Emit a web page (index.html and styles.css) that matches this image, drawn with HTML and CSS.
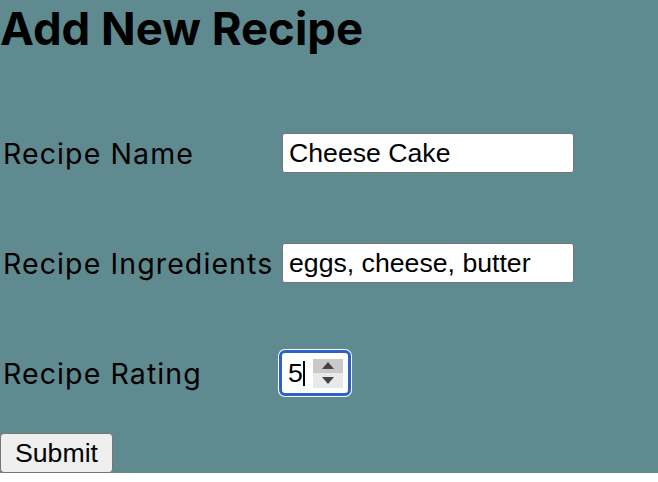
FILE: index.html
```html
<!DOCTYPE html>
<html lang="en">
  <head>
    <title>Add New Recipe</title>
    <link rel="stylesheet" href="styles.css">
  </head>
  <body>
    <div class="page">
      <h1 class="title">Add New Recipe</h1>
      <form class="recipe-form">
        <div class="field">
          <label for="name">Recipe Name</label>
          <input id="name" class="text-input" type="text" value="Cheese Cake">
        </div>
        <div class="field">
          <label for="ingredients">Recipe Ingredients</label>
          <input id="ingredients" class="text-input" type="text" value="eggs, cheese, butter">
        </div>
        <div class="field">
          <label for="rating">Recipe Rating</label>
          <div class="number-box">
            <input id="rating" class="number-input" type="text" value="5">
            <span class="caret"></span>
            <span class="spinner">
              <span class="spin spin-up">
                <svg width="12" height="7" viewBox="0 0 12 7"><path d="M0 7 L6 0 L12 7 Z" fill="#444"/></svg>
              </span>
              <span class="spin spin-down">
                <svg width="12" height="7" viewBox="0 0 12 7"><path d="M0 0 L12 0 L6 7 Z" fill="#444"/></svg>
              </span>
            </span>
          </div>
        </div>
        <button class="submit" type="submit">Submit</button>
      </form>
    </div>
  </body>
</html>
```

FILE: styles.css
```css
body {
  margin: 0;
  background: #fff;
}

.page {
  background-color: #5f8a8f;
  font-family: Inter, "Noto Sans", sans-serif;
  color: #000;
}

.title {
  margin: 0;
  padding-top: 2px;
  font-size: 45.5px;
  line-height: 53px;
  font-weight: 700;
}

.recipe-form {
  display: flex;
  flex-direction: column;
  align-items: flex-start;
  margin-top: 43px;
}

.field {
  display: grid;
  grid-template-columns: 279px 292px;
  align-items: center;
  height: 110px;
  padding-left: 3px;
}

.field label {
  font-size: 28.5px;
  letter-spacing: 1.1px;
}

.text-input {
  box-sizing: border-box;
  width: 292px;
  height: 40px;
  padding: 0 6px;
  border: 1px solid #767676;
  border-radius: 3px;
  background: #fff;
  font-family: "Liberation Sans", Arial, sans-serif;
  font-size: 26.67px;
  color: #000;
}

.number-box {
  box-sizing: border-box;
  display: flex;
  align-items: center;
  width: 72px;
  height: 46px;
  margin-left: -3px;
  padding-left: 6px;
  border: 3px solid #2c62c8;
  border-radius: 6px;
  background: #fff;
  box-shadow: 0 0 0 1px #fff;
}

.number-input {
  width: 15px;
  padding: 0;
  border: none;
  outline: none;
  background: transparent;
  font-family: "Liberation Sans", Arial, sans-serif;
  font-size: 26.67px;
  color: #000;
}

.caret {
  width: 2px;
  height: 25px;
  background: #000;
}

.spinner {
  display: flex;
  flex-direction: column;
  width: 30px;
  height: 29px;
  margin-left: 8px;
}

.spin {
  flex: 1;
  display: flex;
  align-items: center;
  justify-content: center;
}

.spin-up {
  background: #c9c9c9;
}

.spin-down {
  background: #e9e9e9;
}

.submit {
  box-sizing: border-box;
  height: 40px;
  margin-top: 5px;
  padding: 0 14px;
  border: 1px solid #767676;
  border-radius: 4px;
  background: #efefef;
  font-family: "Liberation Sans", Arial, sans-serif;
  font-size: 26.67px;
  color: #000;
}
```
